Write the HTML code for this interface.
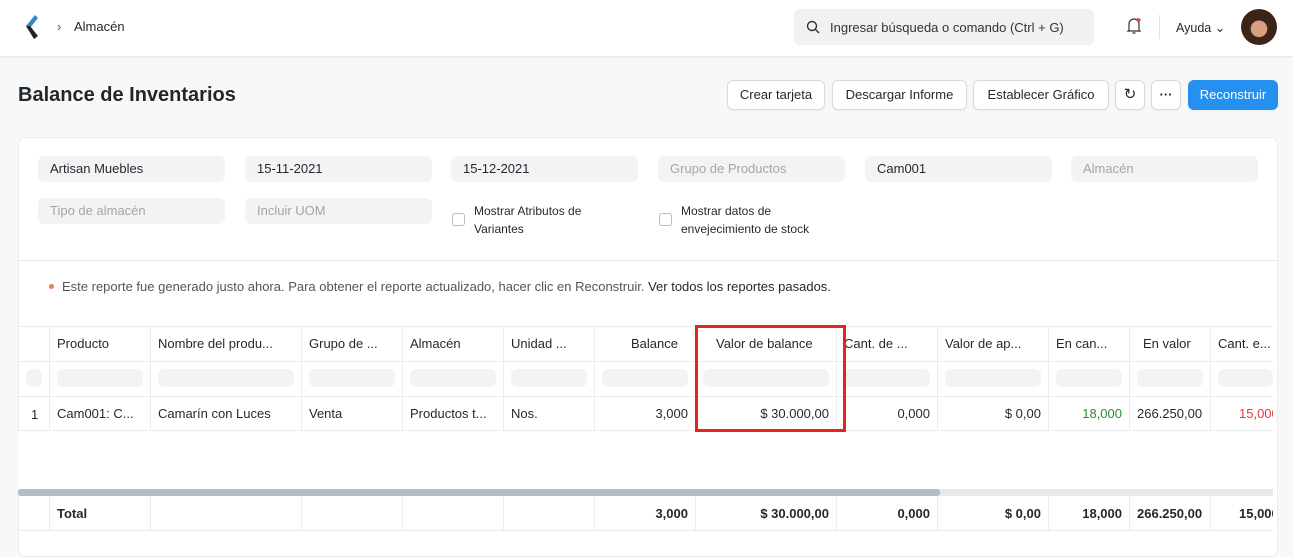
<!DOCTYPE html>
<html><head><meta charset="utf-8"><style>
*{box-sizing:border-box;margin:0;padding:0}
body{width:1293px;height:542px;overflow:hidden;background:#f8f8f8;font-family:"Liberation Sans",sans-serif;font-size:13px;color:#1f272e;position:relative}
.a{position:absolute}
.nav{left:0;top:0;width:1293px;height:57px;background:#fff;border-bottom:1px solid #e8e8e8;box-shadow:0 1px 2px rgba(0,0,0,.04)}
.btn{position:absolute;top:80px;height:30px;background:#fff;border:1px solid #d8dadd;border-radius:6px;font-size:13px;line-height:28px;text-align:center;box-shadow:0 1px 2px rgba(0,0,0,.05)}
.card{left:18px;top:137px;width:1260px;height:420px;background:#fff;border:1px solid #ebeced;border-radius:8px;overflow:hidden}
.in{position:absolute;height:26px;background:#f3f3f4;border-radius:6px;padding-left:12px;line-height:26px;font-size:13px}
.ph{color:#a0a6ad}
.cb{position:absolute;width:13px;height:13px;border:1px solid #b8bcc1;border-radius:3px;background:#fff}
.vl{position:absolute;width:1px;background:#ebeced}
.hl{position:absolute;height:1px;background:#ebeced;left:0;width:1255px}
.t{position:absolute;white-space:nowrap;font-size:13px}
.r{position:absolute;white-space:nowrap;font-size:13px;text-align:right;overflow:hidden}
.f{position:absolute;top:369px;height:18px;background:#f3f3f4;border-radius:6px}
</style></head><body>
<div class="a nav">
<svg class="a" style="left:20px;top:13px" width="22" height="28" viewBox="0 0 22 28"><path d="M15 2 L6 13 L10 15 L18 5Z" fill="#2d8ac6"/><path d="M6 13 L14 26 L18 23 L10 13Z" fill="#222"/></svg>
<div class="t" style="left:57px;top:19px;color:#555">&#8250;</div>
<div class="t" style="left:74px;top:19px">Almacén</div>
<div class="a" style="left:794px;top:9px;width:300px;height:36px;background:#f0f1f2;border-radius:6px"></div>
<svg class="a" style="left:806px;top:20px" width="14" height="14" viewBox="0 0 14 14"><circle cx="6" cy="6" r="4.5" fill="none" stroke="#333" stroke-width="1.4"/><path d="M9.5 9.5L13 13" stroke="#333" stroke-width="1.4"/></svg>
<div class="t" style="left:830px;top:20px;color:#333">Ingresar búsqueda o comando (Ctrl + G)</div>
<svg class="a" style="left:1125px;top:16px" width="18" height="20" viewBox="0 0 18 20"><path d="M4 14 V8 a5 5 0 0 1 10 0 V14 L15 15 H3Z M7.5 17 h3" fill="none" stroke="#333" stroke-width="1.2"/><circle cx="13.5" cy="4" r="2" fill="#e24c4c"/></svg>
<div class="a" style="left:1159px;top:15px;width:1px;height:24px;background:#e2e2e2"></div>
<div class="t" style="left:1176px;top:20px;font-size:12.5px">Ayuda &#8964;</div>
<div class="a" style="left:1241px;top:9px;width:36px;height:36px;border-radius:50%;background:radial-gradient(circle at 50% 55%,#d9a07f 0 30%,#3b2418 32% 100%)"></div>
</div>
<div class="t" style="left:18px;top:84px;font-size:20px;font-weight:bold">Balance de Inventarios</div>
<div class="btn" style="left:727px;width:98px">Crear tarjeta</div>
<div class="btn" style="left:832px;width:135px">Descargar Informe</div>
<div class="btn" style="left:973px;width:136px">Establecer Gráfico</div>
<div class="btn" style="left:1115px;width:30px;font-size:15px">&#8635;</div>
<div class="btn" style="left:1151px;width:30px;font-weight:bold">···</div>
<div class="btn" style="left:1188px;width:90px;background:#2490ef;border-color:#2490ef;color:#fff">Reconstruir</div>
<div class="a card">
<div class="in" style="left:19px;top:18px;width:187px">Artisan Muebles</div>
<div class="in" style="left:226px;top:18px;width:187px">15-11-2021</div>
<div class="in" style="left:432px;top:18px;width:187px">15-12-2021</div>
<div class="in ph" style="left:639px;top:18px;width:187px">Grupo de Productos</div>
<div class="in" style="left:846px;top:18px;width:187px">Cam001</div>
<div class="in ph" style="left:1052px;top:18px;width:187px">Almacén</div>
<div class="in ph" style="left:19px;top:60px;width:187px">Tipo de almacén</div>
<div class="in ph" style="left:226px;top:60px;width:187px">Incluir UOM</div>
<div class="cb" style="left:433px;top:75px"></div>
<div class="t" style="left:455px;top:64px;font-size:12px;line-height:18px">Mostrar Atributos de<br>Variantes</div>
<div class="cb" style="left:640px;top:75px"></div>
<div class="t" style="left:662px;top:64px;font-size:12px;line-height:18px">Mostrar datos de<br>envejecimiento de stock</div>
<div class="hl" style="top:122px;width:1260px"></div>
<div class="a" style="left:30px;top:146px;width:5px;height:5px;border-radius:50%;background:#ef7a4f"></div>
<div class="t" style="left:43px;top:141px;color:#555">Este reporte fue generado justo ahora. Para obtener el reporte actualizado, hacer clic en Reconstruir. <span style="color:#1f272e">Ver todos los reportes pasados.</span></div>
</div>
<div class="a" style="left:18px;top:326px;width:1255px;height:205px;background:#fff;overflow:hidden">
<div class="hl" style="top:0"></div><div class="hl" style="top:35px"></div><div class="hl" style="top:70px"></div><div class="hl" style="top:104px"></div><div class="hl" style="top:204px"></div>
<div class="a" style="left:0;top:163px;width:1255px;height:7px;background:#e6e8ea"></div>
<div class="a" style="left:0;top:163px;width:922px;height:7px;background:#b6bcc3;border-radius:3px"></div>
</div>
<div class="vl" style="left:18px;top:326px;height:105px"></div><div class="vl" style="left:18px;top:496px;height:35px"></div>
<div class="vl" style="left:49px;top:326px;height:105px"></div><div class="vl" style="left:49px;top:496px;height:35px"></div>
<div class="vl" style="left:150px;top:326px;height:105px"></div><div class="vl" style="left:150px;top:496px;height:35px"></div>
<div class="vl" style="left:301px;top:326px;height:105px"></div><div class="vl" style="left:301px;top:496px;height:35px"></div>
<div class="vl" style="left:402px;top:326px;height:105px"></div><div class="vl" style="left:402px;top:496px;height:35px"></div>
<div class="vl" style="left:503px;top:326px;height:105px"></div><div class="vl" style="left:503px;top:496px;height:35px"></div>
<div class="vl" style="left:594px;top:326px;height:105px"></div><div class="vl" style="left:594px;top:496px;height:35px"></div>
<div class="vl" style="left:695px;top:326px;height:105px"></div><div class="vl" style="left:695px;top:496px;height:35px"></div>
<div class="vl" style="left:836px;top:326px;height:105px"></div><div class="vl" style="left:836px;top:496px;height:35px"></div>
<div class="vl" style="left:937px;top:326px;height:105px"></div><div class="vl" style="left:937px;top:496px;height:35px"></div>
<div class="vl" style="left:1048px;top:326px;height:105px"></div><div class="vl" style="left:1048px;top:496px;height:35px"></div>
<div class="vl" style="left:1129px;top:326px;height:105px"></div><div class="vl" style="left:1129px;top:496px;height:35px"></div>
<div class="vl" style="left:1210px;top:326px;height:105px"></div><div class="vl" style="left:1210px;top:496px;height:35px"></div>
<div class="f" style="left:26px;width:16px"></div><div class="f" style="left:57px;width:86px"></div><div class="f" style="left:158px;width:136px"></div><div class="f" style="left:309px;width:86px"></div><div class="f" style="left:410px;width:86px"></div><div class="f" style="left:511px;width:76px"></div><div class="f" style="left:602px;width:86px"></div><div class="f" style="left:703px;width:126px"></div><div class="f" style="left:844px;width:86px"></div><div class="f" style="left:945px;width:96px"></div><div class="f" style="left:1056px;width:66px"></div><div class="f" style="left:1137px;width:66px"></div><div class="f" style="left:1218px;width:55px"></div>
<div class="t" style="left:57px;top:336px">Producto</div>
<div class="t" style="left:158px;top:336px">Nombre del produ...</div>
<div class="t" style="left:309px;top:336px">Grupo de ...</div>
<div class="t" style="left:410px;top:336px">Almacén</div>
<div class="t" style="left:511px;top:336px">Unidad ...</div>
<div class="r" style="left:594px;width:84px;top:336px">Balance</div>
<div class="t" style="left:716px;top:336px">Valor de balance</div>
<div class="t" style="left:844px;top:336px">Cant. de ...</div>
<div class="t" style="left:945px;top:336px">Valor de ap...</div>
<div class="t" style="left:1056px;top:336px">En can...</div>
<div class="t" style="left:1143px;top:336px">En valor</div>
<div class="t" style="left:1218px;top:336px;width:55px;overflow:hidden">Cant. e...</div>
<div class="t" style="left:31px;top:407px">1</div>
<div class="t" style="left:57px;top:406px">Cam001: C...</div>
<div class="t" style="left:158px;top:406px">Camarín con Luces</div>
<div class="t" style="left:309px;top:406px">Venta</div>
<div class="t" style="left:410px;top:406px">Productos t...</div>
<div class="t" style="left:511px;top:406px">Nos.</div>
<div class="r" style="left:594px;width:94px;top:406px">3,000</div>
<div class="r" style="left:695px;width:134px;top:406px">$ 30.000,00</div>
<div class="r" style="left:836px;width:94px;top:406px">0,000</div>
<div class="r" style="left:937px;width:104px;top:406px">$ 0,00</div>
<div class="r" style="left:1048px;width:74px;top:406px;color:#2e8b2e">18,000</div>
<div class="t" style="left:1137px;top:406px;width:73px;overflow:hidden">266.250,00</div>
<div class="t" style="left:1239px;top:406px;color:#e53935;width:34px;overflow:hidden">15,000</div>
<div class="t" style="left:57px;top:506px;font-weight:bold">Total</div>
<div class="r" style="left:594px;width:94px;top:506px;font-weight:bold">3,000</div>
<div class="r" style="left:695px;width:134px;top:506px;font-weight:bold">$ 30.000,00</div>
<div class="r" style="left:836px;width:94px;top:506px;font-weight:bold">0,000</div>
<div class="r" style="left:937px;width:104px;top:506px;font-weight:bold">$ 0,00</div>
<div class="r" style="left:1048px;width:74px;top:506px;font-weight:bold">18,000</div>
<div class="t" style="left:1137px;top:506px;font-weight:bold;width:73px;overflow:hidden">266.250,00</div>
<div class="t" style="left:1239px;top:506px;font-weight:bold;width:34px;overflow:hidden">15,000</div>
<div class="a" style="left:695px;top:325px;width:151px;height:107px;border:3px solid #e8231f"></div>
</body></html>
